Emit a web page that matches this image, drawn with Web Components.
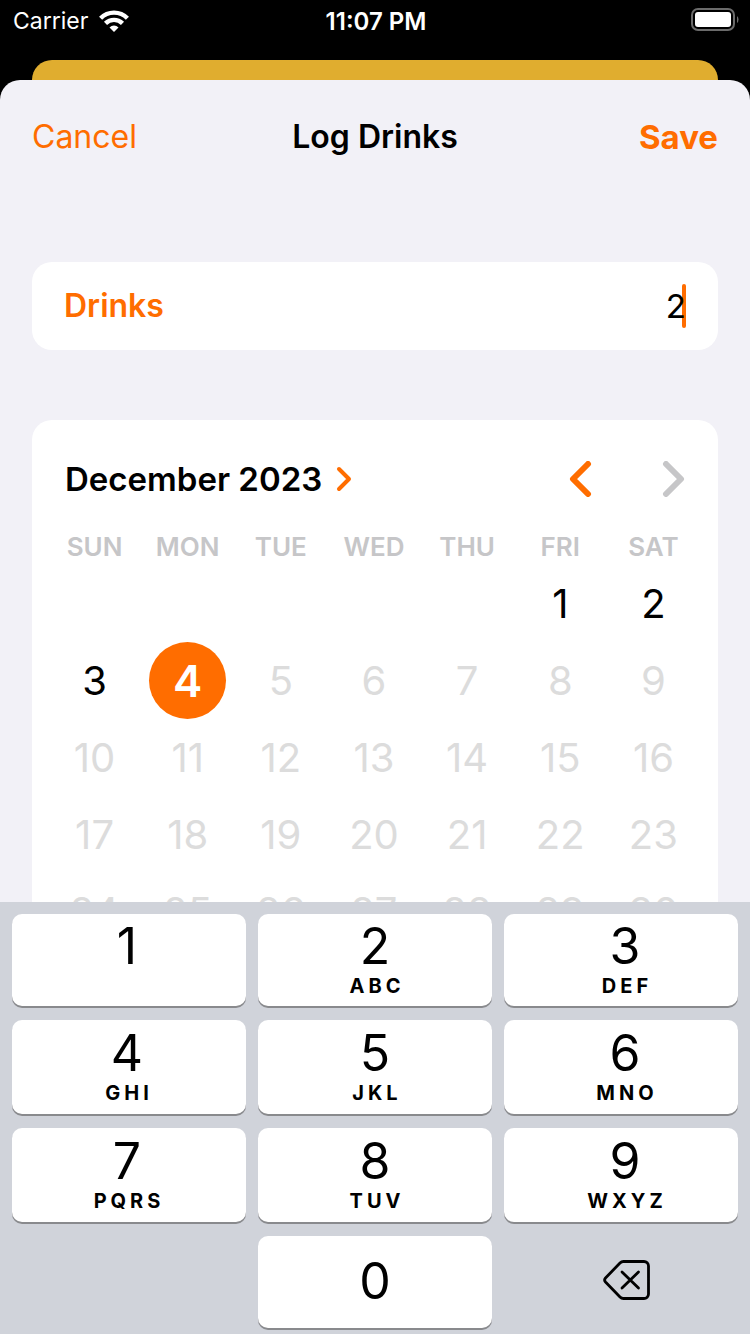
<!DOCTYPE html>
<html lang="en">
<head>
<meta charset="utf-8">
<meta name="viewport" content="width=device-width, initial-scale=1">
<title>Log Drinks</title>
<style>
  html, body { margin: 0; height: 100%; background: #000; }
  body {
    font-family: Inter, "Liberation Sans", sans-serif;
    --accent: #ff6d00;
    --sheet: #f2f1f7;
    --muted: #c6c6c8;
  }
</style>
</head>
<body>
<log-drinks-app></log-drinks-app>

<script>
const RESET = `
  * { box-sizing: border-box; }
  button { appearance: none; border: 0; margin: 0; padding: 0; background: none; font: inherit; color: inherit; cursor: pointer; }
  svg { display: block; }
`;

function define(name, html, setup) {
  const template = document.createElement('template');
  template.innerHTML = html;
  customElements.define(name, class extends HTMLElement {
    constructor() {
      super();
      this.attachShadow({ mode: 'open' }).append(template.content.cloneNode(true));
    }
    connectedCallback() {
      if (setup) setup(this, this.shadowRoot);
    }
  });
}

define('status-bar', `
  <style>${RESET}
    :host { display: grid; grid-template-columns: 1fr auto 1fr; align-items: center; height: 42px; padding: 0 11px 0 13px; color: #fff; font-size: 23px; }
    .carrier { display: flex; align-items: center; gap: 11px; }
    .time { font-size: 24px; font-weight: 600; }
    .battery { justify-self: end; }
  </style>
  <div class="carrier"><span>Carrier</span>
    <svg width="30" height="22" viewBox="0 0 30 22" aria-label="Wi-Fi">
      <g fill="none" stroke="#fff" stroke-width="4.4">
        <path d="M1.6 8.2a19 19 0 0 1 26.8 0"/>
        <path d="M6.5 13.3a12.2 12.2 0 0 1 17 0"/>
      </g>
      <path fill="#fff" d="M15 22l-4.5-4.6a6.4 6.4 0 0 1 9 0z"/>
    </svg>
  </div>
  <div class="time">11:07 PM</div>
  <svg class="battery" width="48" height="26" viewBox="0 0 48 26" aria-label="Battery full">
    <rect x="1" y="1" width="42" height="21" rx="6" fill="none" stroke="#6b6b6b" stroke-width="2"/>
    <rect x="4" y="4" width="36" height="15" rx="3" fill="#fff"/>
    <path d="M46 8q1.500 1 1.500 3.500t-1.500 3.500z" fill="#6b6b6b"/>
  </svg>
`);

define('sheet-header', `
  <style>${RESET}
    :host { display: grid; grid-template-columns: 1fr auto 1fr; align-items: center; height: 112px; padding: 2px 32px 0; font-size: 32px; line-height: 40px; box-sizing: border-box; }
    h1 { margin: 0; font-size: 32px; font-weight: 600; }
    button { color: var(--accent); }
    .cancel { justify-self: start; }
    .save { justify-self: end; font-size: 33px; font-weight: 700; }
  </style>
  <button class="cancel" type="button">Cancel</button>
  <h1><slot></slot></h1>
  <button class="save" type="button">Save</button>
`);

define('drinks-field', `
  <style>${RESET}
    :host { display: flex; align-items: center; gap: 16px; height: 88px; padding: 0 32px; border-radius: 20px; background: #fff; font-size: 32px; line-height: 42px; }
    label { color: var(--accent); font-weight: 600; }
    .value { position: relative; flex: 1; min-width: 0; display: flex; }
    input { position: relative; width: 100%; min-width: 0; height: 44px; padding: 0; border: 0; outline: 0; background: none; color: #000; font: inherit; font-size: 33px; text-align: right; caret-color: var(--accent); }
    .caret { position: absolute; right: 0; top: 0; width: 4px; height: 44px; border-radius: 2px; background: var(--accent); }
  </style>
  <label for="drinks">Drinks</label>
  <div class="value"><span class="caret"></span><input id="drinks" type="text" inputmode="numeric" value="2"></div>
`);

define('month-calendar', `
  <style>${RESET}
    :host { display: block; padding: 22px 18px 24px 16px; border-radius: 20px; background: #fff; }
    header { display: flex; align-items: center; justify-content: space-between; height: 74px; padding: 0 15px 0 17px; }
    .month { display: flex; align-items: center; gap: 14px; font-size: 33px; line-height: 40px; font-weight: 600; }
    nav { display: flex; gap: 70px; }
    path { fill: none; stroke-linecap: round; stroke-linejoin: round; }
    .accent { stroke: var(--accent); }
    .muted { stroke: var(--muted); }
    table { width: 100%; margin-top: 12px; table-layout: fixed; border-collapse: collapse; }
    th { height: 37px; padding: 0; color: var(--muted); font-size: 26px; line-height: 37px; font-weight: 600; }
    td { height: 77px; padding: 0; text-align: center; }
    td button { width: 77px; height: 77px; border-radius: 50%; font-size: 40px; line-height: 40px; display: block; margin: 0 auto; color: #000; }
    td button:disabled { color: #dcdcdc; cursor: default; }
    td button[aria-pressed="true"] { background: var(--accent); color: #fff; font-size: 44px; font-weight: 600; }
  </style>
  <header>
    <button class="month" type="button"><span>December 2023</span>
      <svg width="16" height="26" viewBox="0 0 16 26"><path class="accent" stroke-width="4" d="M3 3l10 10L3 23"/></svg>
    </button>
    <nav>
      <button type="button" aria-label="Previous month"><svg width="23" height="36" viewBox="0 0 23 36"><path class="accent" stroke-width="6" d="M19 3L4 18l15 15"/></svg></button>
      <button type="button" aria-label="Next month" disabled><svg width="23" height="36" viewBox="0 0 23 36"><path class="muted" stroke-width="6" d="M4 3l15 15L4 33"/></svg></button>
    </nav>
  </header>
  <table>
    <thead><tr><th>SUN</th><th>MON</th><th>TUE</th><th>WED</th><th>THU</th><th>FRI</th><th>SAT</th></tr></thead>
    <tbody></tbody>
  </table>
`, (host, root) => {
  const firstWeekday = 5, days = 31, today = 4;
  let html = '';
  for (let start = 1 - firstWeekday; start <= days; start += 7) {
    html += '<tr>';
    for (let day = start; day < start + 7; day++) {
      const state = day === today ? 'aria-pressed="true"' : day > today ? 'disabled' : '';
      html += day < 1 || day > days ? '<td></td>' : `<td><button type="button" ${state}>${day}</button></td>`;
    }
    html += '</tr>';
  }
  root.querySelector('tbody').innerHTML = html;
});

define('pad-key', `
  <style>${RESET}
    :host { display: block; }
    button { width: 100%; height: 100%; display: flex; flex-direction: column; align-items: center; justify-content: center; gap: 6px; padding: var(--key-inset, 0); border-radius: 10px; background: #fff; box-shadow: 0 2px 0 #898a8d; color: #000; }
    .digit { font-size: 50px; line-height: 48px; }
    .letters { height: 22px; font-size: 20px; line-height: 20px; font-weight: 700; letter-spacing: 4px; padding-left: 4px; }
    :host([single]) .letters { display: none; }
    :host([plain]) button { background: none; box-shadow: none; }
    :host([plain]) .letters { display: none; }
  </style>
  <button type="button"><span class="digit"><slot></slot></span><span class="letters"><slot name="letters"></slot></span></button>
`);

define('number-pad', `
  <style>${RESET}
    :host { display: grid; grid-template-columns: repeat(3, 1fr); grid-template-rows: 92px 94px 94px 92px; gap: 14px 12px; padding: 12px 12px 6px; background: #d0d3da; }
    .left { --key-inset: 0 4px 0 0; }
    .right { --key-inset: 0 0 0 8px; }
    .delete { --key-inset: 0 0 4px 12px; }
    .zero { grid-column: 2; --key-inset: 0 0 2px; }
  </style>
  <pad-key class="left">1</pad-key>
  <pad-key>2<span slot="letters">ABC</span></pad-key>
  <pad-key class="right">3<span slot="letters">DEF</span></pad-key>
  <pad-key class="left">4<span slot="letters">GHI</span></pad-key>
  <pad-key>5<span slot="letters">JKL</span></pad-key>
  <pad-key class="right">6<span slot="letters">MNO</span></pad-key>
  <pad-key class="left">7<span slot="letters">PQRS</span></pad-key>
  <pad-key>8<span slot="letters">TUV</span></pad-key>
  <pad-key class="right">9<span slot="letters">WXYZ</span></pad-key>
  <pad-key class="zero" single>0</pad-key>
  <pad-key class="delete" plain>
    <svg width="48" height="40" viewBox="0 0 48 40" role="img" aria-label="Delete" fill="none" stroke="#000" stroke-width="2.800" stroke-linecap="round" stroke-linejoin="round">
      <path d="M20.500 1.500H41a4.500 4.500 0 0 1 4.500 4.500v28a4.500 4.500 0 0 1-4.500 4.500H20.500a5 5 0 0 1-3.500-1.500L2.500 22a3 3 0 0 1 0-4L17 3a5 5 0 0 1 3.500-1.500z"/>
      <path d="M19 12l16.500 16M35.500 12L19 28"/>
    </svg>
  </pad-key>
`);

define('log-drinks-app', `
  <style>${RESET}
    :host { display: flex; flex-direction: column; height: 100vh; }
    status-bar, .behind, number-pad { flex: none; }
    .behind { height: 20px; margin: 18px 32px 0; border-radius: 20px 20px 0 0; background: #e0ad2f; }
    main { flex: 1; min-height: 0; overflow: hidden auto; scrollbar-width: none; border-radius: 20px 20px 0 0; background: var(--sheet); }
    .cards { display: flex; flex-direction: column; gap: 70px; padding: 70px 32px; }
  </style>
  <status-bar></status-bar>
  <div class="behind"></div>
  <main>
    <sheet-header>Log Drinks</sheet-header>
    <div class="cards">
      <drinks-field></drinks-field>
      <month-calendar></month-calendar>
    </div>
  </main>
  <number-pad></number-pad>
`);
</script>
</body>
</html>
